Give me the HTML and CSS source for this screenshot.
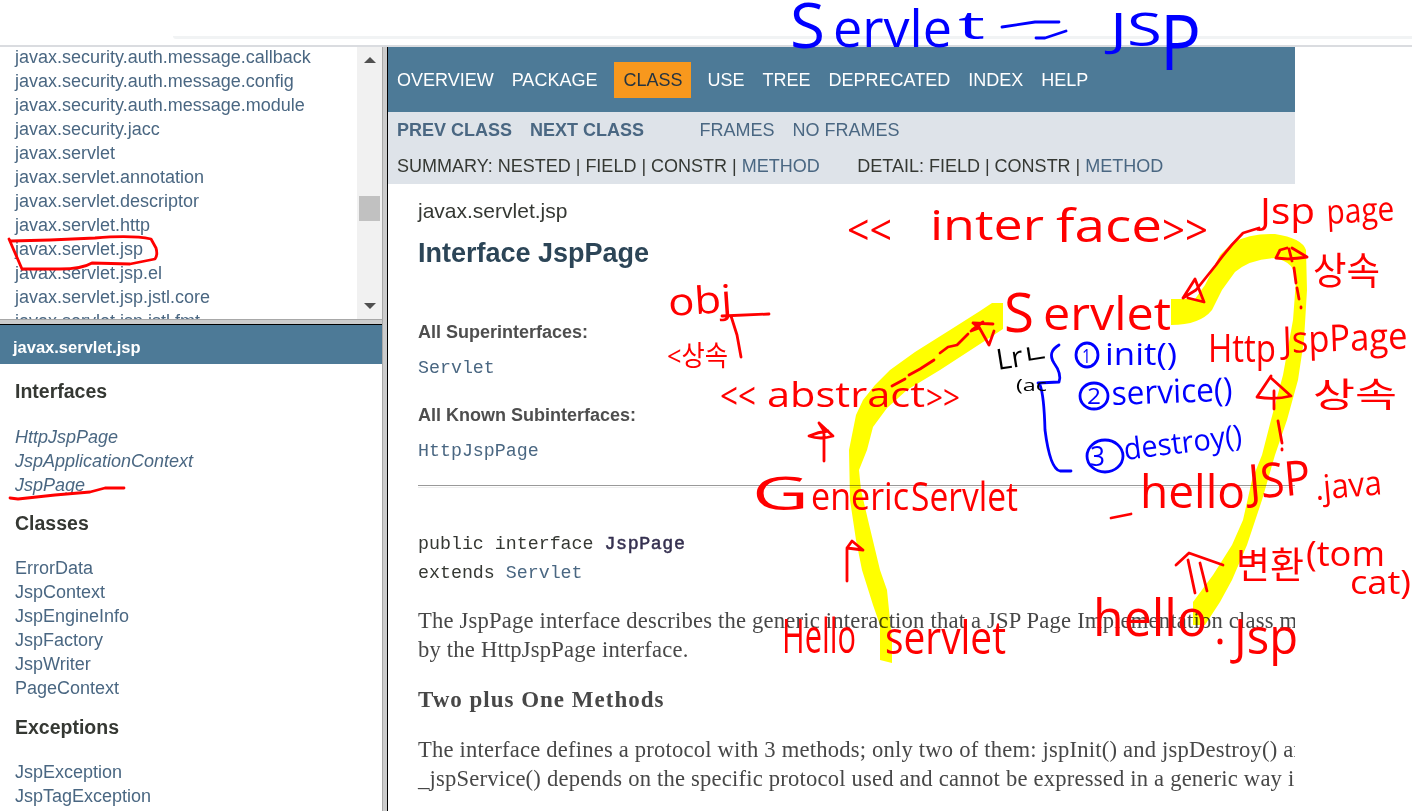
FILE: index.html
```html
<!DOCTYPE html>
<html lang="en">
<head>
<meta charset="utf-8">
<title>JspPage</title>
<link rel="stylesheet" href="styles.css">
</head>
<body>
<div class="chrome"><div class="omnibox"></div></div>
<div class="frames">
  <div class="left">
    <div class="packages">
      <ul class="list">
        <li>javax.security.auth.message.callback</li>
        <li>javax.security.auth.message.config</li>
        <li>javax.security.auth.message.module</li>
        <li>javax.security.jacc</li>
        <li>javax.servlet</li>
        <li>javax.servlet.annotation</li>
        <li>javax.servlet.descriptor</li>
        <li>javax.servlet.http</li>
        <li>javax.servlet.jsp</li>
        <li>javax.servlet.jsp.el</li>
        <li>javax.servlet.jsp.jstl.core</li>
        <li>javax.servlet.jsp.jstl.fmt</li>
      </ul>
      <div class="scrollbar">
        <svg width="12" height="6"><path d="M0 6L6 0L12 6Z" fill="#505050"/></svg>
        <div class="thumb"></div>
        <svg class="down" width="12" height="6"><path d="M0 0L6 6L12 0Z" fill="#505050"/></svg>
      </div>
    </div>
    <div class="split-h"></div>
    <div class="classes">
      <div class="bar">javax.servlet.jsp</div>
      <div class="groups">
        <h2>Interfaces</h2>
        <ul class="list italic"><li>HttpJspPage</li><li>JspApplicationContext</li><li>JspPage</li></ul>
        <h2>Classes</h2>
        <ul class="list"><li>ErrorData</li><li>JspContext</li><li>JspEngineInfo</li><li>JspFactory</li><li>JspWriter</li><li>PageContext</li></ul>
        <h2 class="last">Exceptions</h2>
        <ul class="list"><li>JspException</li><li>JspTagException</li></ul>
      </div>
    </div>
  </div>
  <div class="split-v"></div>
  <div class="main">
    <div class="topnav"><span>OVERVIEW</span><span>PACKAGE</span><span class="current">CLASS</span><span>USE</span><span>TREE</span><span>DEPRECATED</span><span>INDEX</span><span>HELP</span></div>
    <div class="subnav">
      <div class="row"><b>PREV CLASS</b><b>NEXT CLASS</b><span class="frm">FRAMES</span><span>NO FRAMES</span></div>
      <div class="row dark"><span>SUMMARY: NESTED | FIELD | CONSTR | <a>METHOD</a></span><span class="detail">DETAIL: FIELD | CONSTR | <a>METHOD</a></span></div>
    </div>
    <div class="content">
      <div class="pkg">javax.servlet.jsp</div>
      <h1>Interface JspPage</h1>
      <div class="label">All Superinterfaces:</div>
      <div class="code link">Servlet</div>
      <div class="label second">All Known Subinterfaces:</div>
      <div class="code link">HttpJspPage</div>
      <hr>
      <div class="sig">public interface <span class="name">JspPage</span><br>extends <a>Servlet</a></div>
      <p class="p1">The JspPage interface describes the generic interaction that a JSP Page Implementation class must satisfy</p>
      <p class="p2">by the HttpJspPage interface.</p>
      <h3>Two plus One Methods</h3>
      <p class="p3">The interface defines a protocol with 3 methods; only two of them: jspInit() and jspDestroy() are part</p>
      <p class="p4">_jspService() depends on the specific protocol used and cannot be expressed in a generic way in Java.</p>
    </div>
  </div>
</div>

<svg class="ink marker" width="1412" height="811">
  <path d="M880 660L892 663L892 640L887 590L880 570L868 520L861 490L859 470L867 450L873 427L887 408L907 390L940 370L980 344L1003 329L1003 303L992 303L980 311L950 330L915 352L890 370L875 385L863 400L856 415L849 450L850 500L856 540L862 570L873 605L880 625Z"/>
  <path d="M1171 299L1195 299L1205 285L1220 255L1232 243Q1250 233 1275 234Q1302 238 1306 250L1307 290L1304 340L1298 380L1287 420L1275 455L1262 500L1247 545L1232 580L1220 602L1205 625L1193 625L1193 602L1213 575L1232 545L1243 520L1252 480L1262 455L1271 420L1283 375L1293 320L1296 280Q1295 262 1275 258Q1250 259 1235 272L1222 290L1212 310Q1200 325 1171 325Z"/>
</svg>

<svg class="ink" width="1412" height="811">
  <g class="red">
    <!-- sidebar marks -->
    <path d="M9 239L22 269L60 269Q82 269 92 263L130 264L155 259Q158 255 156 248L151 239Q132 235 95 238L50 240L11 241"/>
    <path d="M10 498L18 499L55 495L90 492L105 488H124"/>
    <!-- obj bracket -->
    <path d="M722 316L769 314M731 316L737 335L741 357"/>
    <!-- arrows -->
    <path d="M892 386L905 379M909 375L920 369L934 360M940 353L948 347L957 345L968 334M972 330L983 322M993 324L973 323L979 328L971 331M979 327L989 345L994 331"/>
    <path d="M824 461V431L819 423M819 423L833 436Q820 440 809 436Q818 432 828 431"/>
    <path d="M847 581L847 548L863 550L852 541L847 548"/>
    <path d="M1259 228L1243 233Q1228 248 1216 265L1196 290L1183 298L1195 279L1204 302L1188 298"/>
    <path d="M1276 258L1280 250L1287 248M1292 248L1307 257Q1290 260 1276 258M1289 249L1292 261M1294 268L1296 283M1297 288L1299 299M1301 307V308"/>
    <path d="M1271 376L1257 397Q1275 400 1291 396L1271 378M1274 391V409M1278 421L1282 443M1282 449V450"/>
    <path d="M1176 565L1189 553L1223 565M1188 560L1195 593M1200 563L1207 591"/>
    <path d="M1111 518L1131 514"/>
    <path d="M1220 641V642" stroke-width="5"/>
  </g>
  <g class="blue">
    <path d="M1002 27L1035 22H1059M1036 38H1045L1066 31"/>
    <path d="M1059 345Q1047 352 1054 363Q1062 374 1059 382L1038 383M1040 385Q1044 395 1045 430Q1050 469 1060 471H1071"/>
    <ellipse cx="1087" cy="355" rx="11" ry="12"/><ellipse cx="1094" cy="396" rx="14" ry="13"/><ellipse cx="1105" cy="456" rx="18" ry="16"/>
  </g>

  <g class="words blue-text">
    <text x="790" y="48" font-size="62" textLength="35" lengthAdjust="spacingAndGlyphs">S</text>
    <text x="833" y="47" font-size="51" textLength="119" lengthAdjust="spacingAndGlyphs">ervle</text>
    <text x="958" y="39" font-size="38" textLength="27" lengthAdjust="spacingAndGlyphs">t</text>
    <text x="1110" y="46" font-size="46" textLength="52" lengthAdjust="spacingAndGlyphs">JS</text>
    <text x="1160" y="70" font-size="76" textLength="41" lengthAdjust="spacingAndGlyphs">P</text>
    <text x="1082" y="363" font-size="20" textLength="9" lengthAdjust="spacingAndGlyphs">1</text>
    <text x="1105" y="365" font-size="31" textLength="72" lengthAdjust="spacingAndGlyphs">init()</text>
    <text x="1087" y="404" font-size="22" textLength="14" lengthAdjust="spacingAndGlyphs">2</text>
    <text x="1112" y="405" font-size="33" textLength="121" lengthAdjust="spacingAndGlyphs" transform="rotate(-2 1112 405)">service()</text>
    <text x="1090" y="466" font-size="27" textLength="15" lengthAdjust="spacingAndGlyphs">3</text>
    <text x="1125" y="460" font-size="30" textLength="119" lengthAdjust="spacingAndGlyphs" transform="rotate(-7 1125 460)">destroy()</text>
  </g>
  <g class="words black-text">
    <text x="998" y="370" font-size="29" textLength="53" lengthAdjust="spacingAndGlyphs" transform="rotate(-9 998 370)">Lrㄴ</text>
    <text x="1016" y="391" font-size="16" textLength="31" lengthAdjust="spacingAndGlyphs">(ac</text>
  </g>
  <g class="words red-text">
    <text x="847" y="245" font-size="42" textLength="45" lengthAdjust="spacingAndGlyphs">&lt;&lt;</text>
    <text x="930" y="240" font-size="42" textLength="114" lengthAdjust="spacingAndGlyphs">inter</text>
    <text x="1056" y="242" font-size="46" textLength="106" lengthAdjust="spacingAndGlyphs">face</text>
    <text x="1162" y="245" font-size="42" textLength="46" lengthAdjust="spacingAndGlyphs">&gt;&gt;</text>
    <text x="1004" y="332" font-size="54" textLength="30" lengthAdjust="spacingAndGlyphs">S</text>
    <text x="1043" y="330" font-size="46" textLength="128" lengthAdjust="spacingAndGlyphs">ervlet</text>
    <text x="669" y="316" font-size="38" textLength="64" lengthAdjust="spacingAndGlyphs" transform="rotate(-4 669 316)">obj</text>
    <text x="667" y="366" font-size="28" textLength="61" lengthAdjust="spacingAndGlyphs">&lt;상속</text>
    <text x="720" y="409" font-size="36" textLength="36" lengthAdjust="spacingAndGlyphs">&lt;&lt;</text>
    <text x="767" y="407" font-size="35" textLength="158" lengthAdjust="spacingAndGlyphs">abstract</text>
    <text x="926" y="410" font-size="34" textLength="34" lengthAdjust="spacingAndGlyphs">&gt;&gt;</text>
    <text x="752" y="510" font-size="46" textLength="57" lengthAdjust="spacingAndGlyphs">G</text>
    <text x="811" y="510" font-size="38" textLength="98" lengthAdjust="spacingAndGlyphs">eneric</text>
    <text x="911" y="511" font-size="40" textLength="107" lengthAdjust="spacingAndGlyphs">Servlet</text>
    <text x="782" y="653" font-size="48" textLength="74" lengthAdjust="spacingAndGlyphs">Hello</text>
    <text x="885" y="654" font-size="45" textLength="121" lengthAdjust="spacingAndGlyphs">servlet</text>
    <text x="1260" y="224" font-size="36" textLength="55" lengthAdjust="spacingAndGlyphs">Jsp</text>
    <text x="1327" y="224" font-size="34" textLength="68" lengthAdjust="spacingAndGlyphs" transform="rotate(-3 1327 224)">page</text>
    <text x="1313" y="284" font-size="38" textLength="67" lengthAdjust="spacingAndGlyphs">상속</text>
    <text x="1208" y="362" font-size="38" textLength="68" lengthAdjust="spacingAndGlyphs">Http</text>
    <text x="1283" y="353" font-size="37" textLength="125" lengthAdjust="spacingAndGlyphs" transform="rotate(-2 1283 353)">JspPage</text>
    <text x="1313" y="407" font-size="34" textLength="84" lengthAdjust="spacingAndGlyphs">상속</text>
    <text x="1140" y="508" font-size="46" textLength="105" lengthAdjust="spacingAndGlyphs">hello</text>
    <text x="1250" y="499" font-size="48" textLength="62" lengthAdjust="spacingAndGlyphs" transform="rotate(-5 1250 499)">JSP</text>
    <text x="1316" y="500" font-size="34" textLength="67" lengthAdjust="spacingAndGlyphs" transform="rotate(-5 1316 500)">.java</text>
    <text x="1236" y="579" font-size="37" textLength="68" lengthAdjust="spacingAndGlyphs">변환</text>
    <text x="1306" y="566" font-size="34" textLength="79" lengthAdjust="spacingAndGlyphs">(tom</text>
    <text x="1350" y="594" font-size="32" textLength="61" lengthAdjust="spacingAndGlyphs">cat)</text>
    <text x="1093" y="636" font-size="52" textLength="114" lengthAdjust="spacingAndGlyphs">hello</text>
    <text x="1234" y="654" font-size="50" textLength="64" lengthAdjust="spacingAndGlyphs">Jsp</text>
  </g>
</svg>
</body>
</html>
```
FILE: styles.css
```css
* { box-sizing: border-box; }
body {
  margin: 0; width: 1412px; height: 811px; overflow: hidden; background: #fff;
  font-family: "Liberation Sans", Arial, sans-serif; font-size: 18px; color: #353833;
  display: flex; flex-direction: column; position: relative;
}
h1, h2, h3, p, ul { margin: 0; padding: 0; }
a { color: #4a6782; }
.chrome { height: 47px; flex: none; border-bottom: 2px solid #dadce0; padding: 36px 0 0 173px; }
.omnibox { height: 3px; background: #f1f3f4; border-radius: 0 0 0 8px; }
.frames { flex: 1; display: flex; min-height: 0; }
.left { width: 382px; display: flex; flex-direction: column; }
.packages { height: 272px; display: flex; justify-content: space-between; overflow: hidden; }
.list { list-style: none; color: #4a6782; line-height: 24px; padding-left: 15px; white-space: nowrap; }
.packages .list { margin-top: -2px; }
.italic { font-style: italic; }
.scrollbar { width: 25px; background: #f1f1f1; display: flex; flex-direction: column; align-items: center; padding-top: 10px; }
.thumb { width: 21px; height: 25px; background: #c1c1c1; margin-top: 133px; }
.down { margin-top: 82px; }
.split-h { height: 6px; background: #ccc; border-top: 1px solid #a8a8a8; border-bottom: 1px solid #000; flex: none; }
.split-v { width: 6px; background: #ccc; border-left: 1px solid #a8a8a8; border-right: 1px solid #000; flex: none; }
.bar { height: 39px; background: #4d7a97; color: #fff; font-weight: bold; font-size: 16.5px; line-height: 45px; padding-left: 13px; }
.groups h2 { font-size: 19.5px; line-height: 24px; margin: 14px 0 22px; padding-left: 15px; }
.groups h2:first-child { margin-top: 15px; }
.groups .list + h2 { margin: 14px 0 21px; }
.groups .list + h2.last { margin-top: 15px; }
.main { width: 907px; overflow: hidden; }
.topnav { height: 65px; background: #4d7a97; color: #fff; display: flex; align-items: center; gap: 18px; padding-left: 9px; }
.topnav span { height: 36px; line-height: 37px; }
.topnav .current { background: #f8981d; color: #253441; padding: 0 9px; margin: 0 -2px 0 -1px; }
.subnav { height: 72px; background: #dee3e9; color: #4a6782; }
.row { height: 36px; line-height: 36px; padding-left: 9px; display: flex; gap: 18px; white-space: nowrap; }
.dark { color: #353833; }
.frm { margin-left: 37.5px; }
.detail { margin-left: 19.5px; }
.content { padding: 15px 0 0 30px; white-space: nowrap; }
.pkg { font-size: 21px; line-height: 24px; }
h1 { font-size: 27px; line-height: 32px; margin-top: 14px; color: #2c4557; }
.label { font-weight: bold; color: #4e4e4e; line-height: 24px; margin-top: 51px; }
.label.second { margin-top: 23px; }
.code, .sig { font-family: "Liberation Mono", monospace; font-size: 18.3px; }
.code { line-height: 24px; margin-top: 12px; color: #4a6782; }
hr { margin: 22px 0 0; border: 0; height: 3px; border-top: 1px solid #999; border-bottom: 1px solid #eee; }
.sig { line-height: 29px; margin-top: 42px; }
.name { color: #353050; letter-spacing: .6px; -webkit-text-stroke: .5px #353050; }
p { font-family: "Liberation Serif", Georgia, serif; color: #474747; font-size: 22.6px; line-height: 29px; letter-spacing: .2px; }
.p1 { margin-top: 18px; }
h3 { font-family: "Liberation Serif", Georgia, serif; color: #474747; font-size: 23px; line-height: 29px; margin: 21px 0; letter-spacing: 1px; }
.ink { position: absolute; left: 0; top: 0; pointer-events: none; }
.marker { fill: #ff0; mix-blend-mode: multiply; }
.red, .blue { fill: none; stroke-width: 2.8; stroke-linecap: round; stroke-linejoin: round; }
.red { stroke: #f00; }
.blue { stroke: #00f; }
.words { font-family: "Open Sans", "Noto Sans CJK KR", sans-serif; }
.red-text { fill: #f00; }
.blue-text { fill: #00f; }
.black-text { fill: #000; }
```
